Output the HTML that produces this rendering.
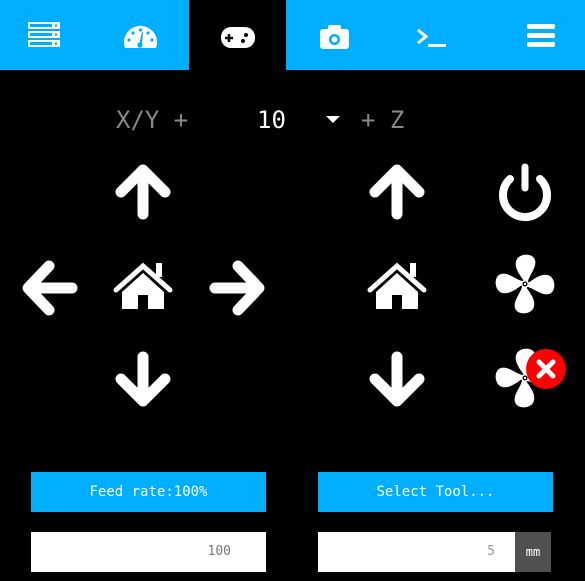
<!DOCTYPE html>
<html><head><meta charset="utf-8"><style>
body{margin:0;width:585px;height:581px;background:#000;overflow:hidden;font-family:"DejaVu Sans Mono","Liberation Mono",monospace;position:relative}
.hdr{position:absolute;left:0;top:0;width:585px;height:70px;background:#00aeff}
.act{position:absolute;left:189px;top:0;width:97px;height:70px;background:#000}
.t{position:absolute;top:104px;font-size:24px;line-height:32px}
.btn{position:absolute;height:40px;top:472px;background:#00aeff;color:#fff;font-size:14px;text-align:center;line-height:40px}
.inp{position:absolute;height:40px;top:532px;background:#fff;color:#777;font-size:13px;line-height:40px;text-align:right;box-sizing:border-box}
svg{position:absolute;left:0;top:0}
</style></head><body>
<div class="hdr"></div><div class="act"></div>
<div class="t" style="left:116px;color:#888">X/Y +</div>
<div class="t" style="left:257px;color:#fff">10</div>
<div class="t" style="left:361px;color:#888">+ Z</div>
<div class="btn" style="left:31px;width:235px">Feed rate:100%</div>
<div class="btn" style="left:318px;width:235px">Select Tool...</div>
<div class="inp" style="left:31px;width:235px;padding-right:35px">100</div>
<div class="inp" style="left:318px;width:197px;padding-right:20px;color:#999">5</div>
<div style="position:absolute;left:515px;top:532px;width:36px;height:40px;background:#505050;color:#fff;font-size:12px;line-height:40px;text-align:center">mm</div>
<svg width="585" height="581" viewBox="0 0 585 581">
<defs>
<g id="fan"><g fill="#fff">
<path id="pt" d="M-1 -3 C-6 -10 -12 -18 -8 -25 C-4 -31 8 -31 10 -24 C12 -17 5 -10 3 -3 Z"/>
<use href="#pt" transform="rotate(90)"/><use href="#pt" transform="rotate(180)"/><use href="#pt" transform="rotate(270)"/>
<circle r="4"/>
</g><circle r="2.5" fill="#000"/><circle r="1.2" fill="#fff"/></g>
<g id="home"><path d="M-27 0 L0 -24 L27 0" stroke="#fff" stroke-width="5" fill="none" stroke-linecap="round"/><rect x="13" y="-27" width="6" height="14" fill="#fff"/><path d="M-21 2 L0 -17 L21 2 V19 H5 V5 H-5 V19 H-21Z" fill="#fff"/></g>
</defs>
<g fill="#fff">
<rect x="28" y="22" width="32" height="7"/><rect x="28" y="31" width="32" height="7"/><rect x="28" y="40" width="32" height="7"/>
</g>
<g fill="#00aeff"><rect x="30" y="24" width="22" height="3"/><rect x="30" y="33" width="22" height="3"/><rect x="30" y="42" width="22" height="3"/><circle cx="56" cy="25.5" r="1.3"/><circle cx="56" cy="34.5" r="1.3"/><circle cx="56" cy="43.5" r="1.3"/></g>
<path d="M125 48 A16.5 16.5 0 1 1 156 48 Z" fill="#fff"/>
<g fill="#00aeff"><circle cx="140.5" cy="30" r="1.6"/><circle cx="133" cy="33" r="1.6"/><circle cx="148" cy="33" r="1.6"/><circle cx="129" cy="40" r="1.6"/><circle cx="152" cy="40" r="1.6"/><circle cx="140" cy="45" r="2.6"/><path d="M139 45 L142 32 L143 32 L142 45Z"/></g>
<rect x="221" y="27" width="34" height="21" rx="10" fill="#fff"/>
<path d="M229 34 v8 M225 38 h8" stroke="#000" stroke-width="2.5"/><circle cx="246" cy="35" r="2" fill="#000"/><circle cx="243" cy="41" r="2" fill="#000"/>
<rect x="320" y="29" width="29" height="20" rx="3" fill="#fff"/><rect x="328" y="25" width="13" height="6" rx="2" fill="#fff"/><circle cx="334.5" cy="39.5" r="5.5" fill="#00aeff"/><circle cx="334.5" cy="39.5" r="3" fill="#fff"/>
<path d="M418 30 L426 36.5 L418 43" stroke="#fff" stroke-width="3" fill="none"/><rect x="428" y="44" width="18" height="3" fill="#fff"/>
<g fill="#fff"><rect x="527" y="24" width="28" height="5" rx="1.5"/><rect x="527" y="33" width="28" height="5" rx="1.5"/><rect x="527" y="42" width="28" height="5" rx="1.5"/></g>
<path d="M326 116 h14 l-7 7z" fill="#fff"/>
<g stroke="#fff" stroke-width="11" stroke-linecap="round" stroke-linejoin="round" fill="none">
<path d="M143 214 V171 M121 192 L143 170 L165 192"/>
<path d="M143 357 V400 M121 379 L143 401 L165 379"/>
<path d="M72 288 H29 M49 266 L28 288 L49 310"/>
<path d="M215 288 H258 M238 266 L259 288 L238 310"/>
<path d="M397 214 V171 M375 192 L397 170 L419 192"/>
<path d="M397 357 V400 M375 379 L397 401 L419 379"/>
</g>
<use href="#home" transform="translate(143,290)"/>
<use href="#home" transform="translate(397,290)"/>
<path d="M510 179 A22 22 0 1 0 540 179" stroke="#fff" stroke-width="8" fill="none" stroke-linecap="round"/>
<path d="M525 167 V188" stroke="#fff" stroke-width="7" stroke-linecap="round"/>
<use href="#fan" transform="translate(525,284)"/>
<use href="#fan" transform="translate(525,378)"/>
<circle cx="546" cy="369" r="20" fill="#f00"/>
<path d="M539 362 L553 376 M553 362 L539 376" stroke="#fff" stroke-width="5" stroke-linecap="round"/>
</svg>
</body></html>
